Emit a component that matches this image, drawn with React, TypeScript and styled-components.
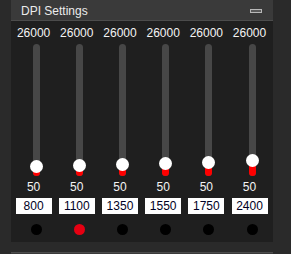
import React from "react";
import styled, { createGlobalStyle } from "styled-components";

const Global = createGlobalStyle`
  html, body { margin: 0; padding: 0; background: #2a2a2a; }
  body { font-family: "Liberation Sans", Arial, sans-serif; overflow: hidden; }
`;

const Page = styled.div`
  width: 291px;
  height: 254px;
  padding-left: 11px;
  box-sizing: border-box;
  display: flex;
  flex-direction: column;
`;

const Panel = styled.section`
  width: 262px;
  display: flex;
  flex-direction: column;
`;

const Header = styled.div`
  height: 20px;
  background: #3a3a3a;
  border-bottom: 1px solid #4c4c4c;
  display: flex;
  align-items: center;
  justify-content: space-between;
  padding: 0 11px 0 10px;
`;

const Title = styled.span`
  color: #ececec;
  font-size: 12px;
  line-height: 14px;
  margin-top: 1px;
`;

const MinButton = styled.span`
  width: 10px;
  height: 2px;
  border: 1px solid #b8b8b8;
  background: #5a5a5a;
  margin-top: 1px;
`;

const Body = styled.div`
  background: #1f1f1f;
  padding: 5px 0 7px 1px;
  display: grid;
  grid-template-columns: repeat(6, 43.2px);
`;

const Column = styled.div`
  display: flex;
  flex-direction: column;
  align-items: center;
`;

const Label = styled.div`
  color: #f4f4f4;
  font-size: 12px;
  line-height: 15px;
  height: 15px;
`;

const Track = styled.div`
  position: relative;
  width: 7px;
  height: 132px;
  margin-top: 3px;
  margin-left: 5px;
  border-radius: 4px;
  background: #474747;
`;

const Fill = styled.div`
  position: absolute;
  left: 0;
  bottom: 0;
  width: 7px;
  border-radius: 0 0 4px 4px;
  background: #ff0000;
`;

const Thumb = styled.div`
  position: absolute;
  left: -3px;
  width: 13px;
  height: 13px;
  border-radius: 50%;
  background: #ffffff;
`;

const MinLabel = styled(Label)`
  margin-top: 4px;
  height: 14px;
  line-height: 14px;
`;

const ValueBox = styled.div`
  margin-top: 4px;
  width: 36px;
  height: 16px;
  background: #ffffff;
  color: #000024;
  font-size: 12px;
  line-height: 16px;
  text-align: center;
`;

const Dot = styled.div<{ $active?: boolean }>`
  margin-top: 10px;
  margin-left: 5px;
  width: 11px;
  height: 11px;
  border-radius: 50%;
  background: ${(p) => (p.$active ? "#e60012" : "#000000")};
`;

const NextHeader = styled.div`
  margin-top: 10px;
  width: 262px;
  height: 12px;
  border-top: 1px solid #4c4c4c;
  background: #3a3a3a;
`;

const values = [800, 1100, 1350, 1550, 1750, 2400];

export default function App() {
  return (
    <>
      <Global />
      <Page>
        <Panel>
          <Header>
            <Title>DPI Settings</Title>
            <MinButton />
          </Header>
          <Body>
            {values.map((v, i) => {
              const offset = 9.7 + (v - 800) * 0.0039;
              return (
                <Column key={i}>
                  <Label>26000</Label>
                  <Track>
                    <Fill style={{ height: `${offset}px` }} />
                    <Thumb style={{ bottom: `${offset - 6.5}px` }} />
                  </Track>
                  <MinLabel>50</MinLabel>
                  <ValueBox>{v}</ValueBox>
                  <Dot $active={i === 1} />
                </Column>
              );
            })}
          </Body>
        </Panel>
        <NextHeader />
      </Page>
    </>
  );
}
